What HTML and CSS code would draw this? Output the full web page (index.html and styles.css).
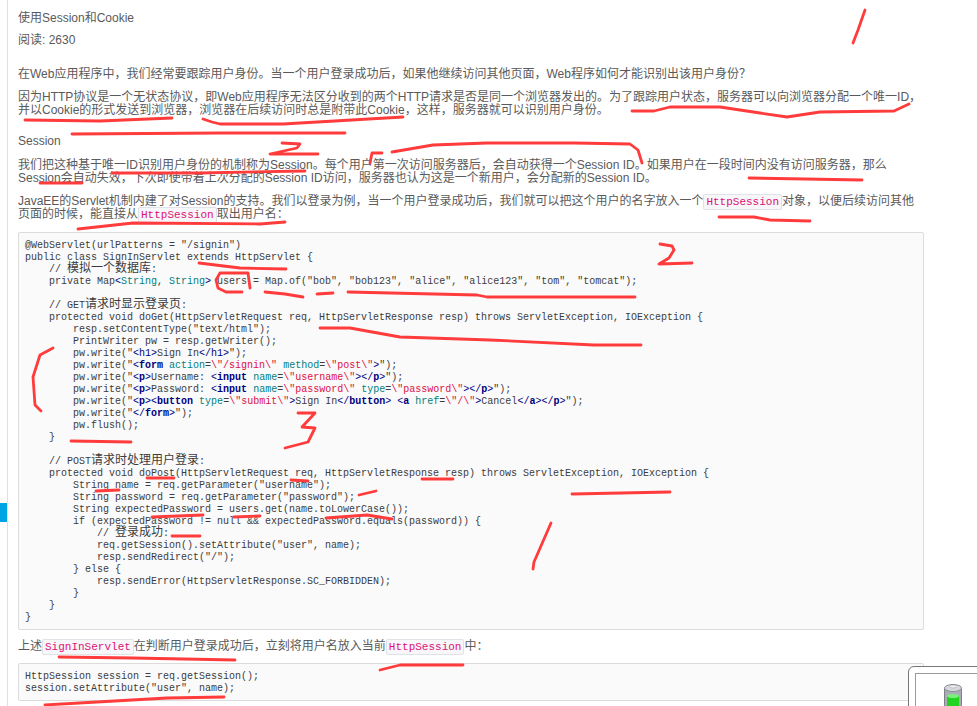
FILE: index.html
```html
<!DOCTYPE html>
<html lang="zh">
<head>
<meta charset="utf-8">
<title>使用Session和Cookie</title>
<link rel="stylesheet" href="styles.css">
</head>
<body>
<div class="tab"></div>
<main class="article">
<h1 class="title">使用Session和Cookie</h1>
<div class="reads">阅读: 2630</div>
<p class="para">在Web应用程序中，我们经常要跟踪用户身份。当一个用户登录成功后，如果他继续访问其他页面，Web程序如何才能识别出该用户身份？</p>
<p class="para">因为HTTP协议是一个无状态协议，即Web应用程序无法区分收到的两个HTTP请求是否是同一个浏览器发出的。为了跟踪用户状态，服务器可以向浏览器分配一个唯一ID，并以Cookie的形式发送到浏览器，浏览器在后续访问时总是附带此Cookie，这样，服务器就可以识别用户身份。</p>
<h2 class="heading">Session</h2>
<p class="para">我们把这种基于唯一ID识别用户身份的机制称为Session。每个用户第一次访问服务器后，会自动获得一个Session ID。如果用户在一段时间内没有访问服务器，那么Session会自动失效，下次即使带着上次分配的Session ID访问，服务器也认为这是一个新用户，会分配新的Session ID。</p>
<p class="para para-last">JavaEE的Servlet机制内建了对Session的支持。我们以登录为例，当一个用户登录成功后，我们就可以把这个用户的名字放入一个<code class="inline">HttpSession</code>对象，以便后续访问其他页面的时候，能直接从<code class="inline">HttpSession</code>取出用户名：</p>
<pre class="code">@WebServlet(urlPatterns = "/signin")
public class SignInServlet extends HttpServlet {
    // <span class="zh">模拟一个数据库</span>:
    private Map<span class="tg">&lt;</span><span class="at">String</span>, <span class="at">String</span><span class="tg">&gt;</span> users = Map.of("bob", "bob123", "alice", "alice123", "tom", "tomcat");

    // GET<span class="zh">请求时显示登录页</span>:
    protected void doGet(HttpServletRequest req, HttpServletResponse resp) throws ServletException, IOException {
        resp.setContentType("text/html");
        PrintWriter pw = resp.getWriter();
        pw.write("<span class="tg">&lt;h1&gt;</span>Sign In<span class="tg">&lt;/h1&gt;</span>");
        pw.write("<span class="tg">&lt;<b>form</b></span> <span class="at">action</span>=<span class="st">\"/signin\"</span> <span class="at">method</span>=<span class="st">\"post\"</span><span class="tg">&gt;</span>");
        pw.write("<span class="tg">&lt;<b>p</b>&gt;</span>Username: <span class="tg">&lt;<b>input</b></span> <span class="at">name</span>=<span class="st">\"username\"</span><span class="tg">&gt;&lt;/<b>p</b>&gt;</span>");
        pw.write("<span class="tg">&lt;<b>p</b>&gt;</span>Password: <span class="tg">&lt;<b>input</b></span> <span class="at">name</span>=<span class="st">\"password\"</span> <span class="at">type</span>=<span class="st">\"password\"</span><span class="tg">&gt;&lt;/<b>p</b>&gt;</span>");
        pw.write("<span class="tg">&lt;<b>p</b>&gt;&lt;<b>button</b></span> <span class="at">type</span>=<span class="st">\"submit\"</span><span class="tg">&gt;</span>Sign In<span class="tg">&lt;/<b>button</b>&gt;</span> <span class="tg">&lt;<b>a</b></span> <span class="at">href</span>=<span class="st">\"/\"</span><span class="tg">&gt;</span>Cancel<span class="tg">&lt;/<b>a</b>&gt;&lt;/<b>p</b>&gt;</span>");
        pw.write("<span class="tg">&lt;/<b>form</b>&gt;</span>");
        pw.flush();
    }

    // POST<span class="zh">请求时处理用户登录</span>:
    protected void doPost(HttpServletRequest req, HttpServletResponse resp) throws ServletException, IOException {
        String name = req.getParameter("username");
        String password = req.getParameter("password");
        String expectedPassword = users.get(name.toLowerCase());
        if (expectedPassword != null &amp;&amp; expectedPassword.equals(password)) {
            // <span class="zh">登录成功</span>:
            req.getSession().setAttribute("user", name);
            resp.sendRedirect("/");
        } else {
            resp.sendError(HttpServletResponse.SC_FORBIDDEN);
        }
    }
}</pre>
<p class="para">上述<code class="inline">SignInServlet</code>在判断用户登录成功后，立刻将用户名放入当前<code class="inline">HttpSession</code>中：</p>
<pre class="code">HttpSession session = req.getSession();
session.setAttribute("user", name);</pre>
</main>
<svg class="ink" width="977" height="706" viewBox="0 0 977 706" aria-hidden="true">
<polyline points="25,120 100,121 172,118"/>
<polyline points="203,119 212,122 220,124 283,124 403,117"/>
<polyline points="72,134 220,133 345,133"/>
<polyline points="282,143 300,144 297,148 270,154 318,154"/>
<polyline points="370,163 372,153 382,153"/>
<polyline points="392,152 433,145 487,143 574,143 630,144 638,150 642,163"/>
<polyline points="112,173 200,173 305,171"/>
<polyline points="40,183 82,183"/>
<polyline points="78,229 133,223 260,224 285,222"/>
<polyline points="865,10 858,30 853,43"/>
<polyline points="632,111 654,111 670,107 720,107 760,113 787,117 820,112 894,111 909,104"/>
<polyline points="749,178 862,180"/>
<polyline points="719,217 754,217 770,220 810,221"/>
<polyline points="199,263 240,268 286,269"/>
<polyline points="250,288 248,273 220,273 216,280 218,288 226,292 242,292"/>
<polyline points="265,292 285,294 303,297"/>
<polyline points="317,294 333,293"/>
<polyline points="348,292 477,295 487,297 635,297"/>
<polyline points="320,328 350,328 400,337 490,340 594,345 641,345"/>
<polyline points="660,244 672,246 674,250 669,258 659,264 692,263"/>
<polyline points="53,348 40,355 33,377 35,405 41,411"/>
<polyline points="71,441 131,442"/>
<polyline points="298,413 315,413 302,427 315,428 308,442 285,448"/>
<polyline points="147,478 174,478"/>
<polyline points="291,480 308,481"/>
<polyline points="422,479 453,479"/>
<polyline points="96,491 119,490"/>
<polyline points="359,495 376,491"/>
<polyline points="152,517 203,515"/>
<polyline points="234,517 260,516"/>
<polyline points="326,518 367,515 392,519"/>
<polyline points="172,536 200,536"/>
<polyline points="59,657 133,658 235,660"/>
<polyline points="380,670 400,665 463,665"/>
<polyline points="45,705 97,702 167,698 224,697"/>
<polyline points="572,494 670,492"/>
<polyline points="551,523 534,562 533,569"/>
</svg>
<aside class="toast">
<div class="toast-inner">
<svg class="battery" width="18" height="24" viewBox="0 0 18 24" aria-hidden="true">
<rect x="0.5" y="3" width="17" height="21" rx="3" fill="#a9adb5" stroke="#7d8087"/>
<ellipse cx="9" cy="4" rx="8.5" ry="3.5" fill="#d8dadf" stroke="#8a8d94"/>
<ellipse cx="9" cy="2.5" rx="3.5" ry="1.5" fill="#f4f4f6" stroke="#9a9da3" stroke-width=".6"/>
<rect x="3" y="12" width="12" height="12" fill="#22d422"/>
<ellipse cx="9" cy="12" rx="6" ry="2" fill="#7cf07c"/>
</svg>
</div>
</aside>
</body>
</html>
```
FILE: styles.css
```css
html, body {
  margin: 0;
  height: 706px;
  overflow: hidden;
  background: #fff;
}
body {
  position: relative;
  font-family: "Liberation Sans", "Noto Sans CJK SC", sans-serif;
  font-size: 12px;
  line-height: 13px;
  color: #5a5a5a;
}
.tab {
  position: absolute;
  left: 0;
  top: 503px;
  width: 7px;
  height: 19px;
  background: #00a4e4;
}
.article {
  margin-left: 7px;
  height: 706px;
  box-sizing: border-box;
  width: 917px;
  padding: 12px 0 0 10px;
  border-left: 1px solid #e0e0e0;
}
.title {
  margin: 0 0 9px;
  font-size: 12px;
  line-height: 13px;
  font-weight: normal;
}
.reads {
  margin-bottom: 21px;
}
.para {
  margin: 0 0 10px;
}
.para-last {
  margin-bottom: 11px;
}
.heading {
  margin: 18px 0 11px;
  font-size: 12px;
  line-height: 13px;
  font-weight: normal;
}
.inline {
  font-family: "Liberation Mono", monospace;
  font-size: 11px;
  line-height: 1;
  color: #dd1177;
  background: #f7f7f9;
  border: 1px solid #e1e1e8;
  border-radius: 2px;
  padding: 1px 2px;
}
.code {
  margin: 0 0 10px;
  padding: 7px 6px 5px;
  border: 1px solid #dcdcdc;
  border-radius: 2px;
  background: #fafafa;
  font-family: "Liberation Mono", monospace;
  font-size: 10px;
  line-height: 12px;
  color: #3c3c3c;
}
.zh {
  font-family: "Noto Sans CJK SC", sans-serif;
  font-size: 12px;
  line-height: 0;
}
.tg { color: #000080; }
.at { color: #008080; }
.st { color: #dd1144; }
.ink {
  position: absolute;
  left: 0;
  top: 0;
  pointer-events: none;
}
.ink polyline {
  fill: none;
  stroke: #ff3b3b;
  stroke-width: 2.8;
  stroke-linecap: round;
  stroke-linejoin: round;
}
.toast {
  position: absolute;
  left: 908px;
  top: 666px;
  width: 90px;
  height: 60px;
  box-sizing: border-box;
  padding: 6px;
  background: #fff;
  border: 1px solid #777;
  border-radius: 6px 0 0 0;
}
.toast-inner {
  height: 60px;
  box-sizing: border-box;
  padding: 10px 0 0 28px;
  border: 1px solid #999;
  background: #fff;
}
.battery {
  display: block;
}
```
